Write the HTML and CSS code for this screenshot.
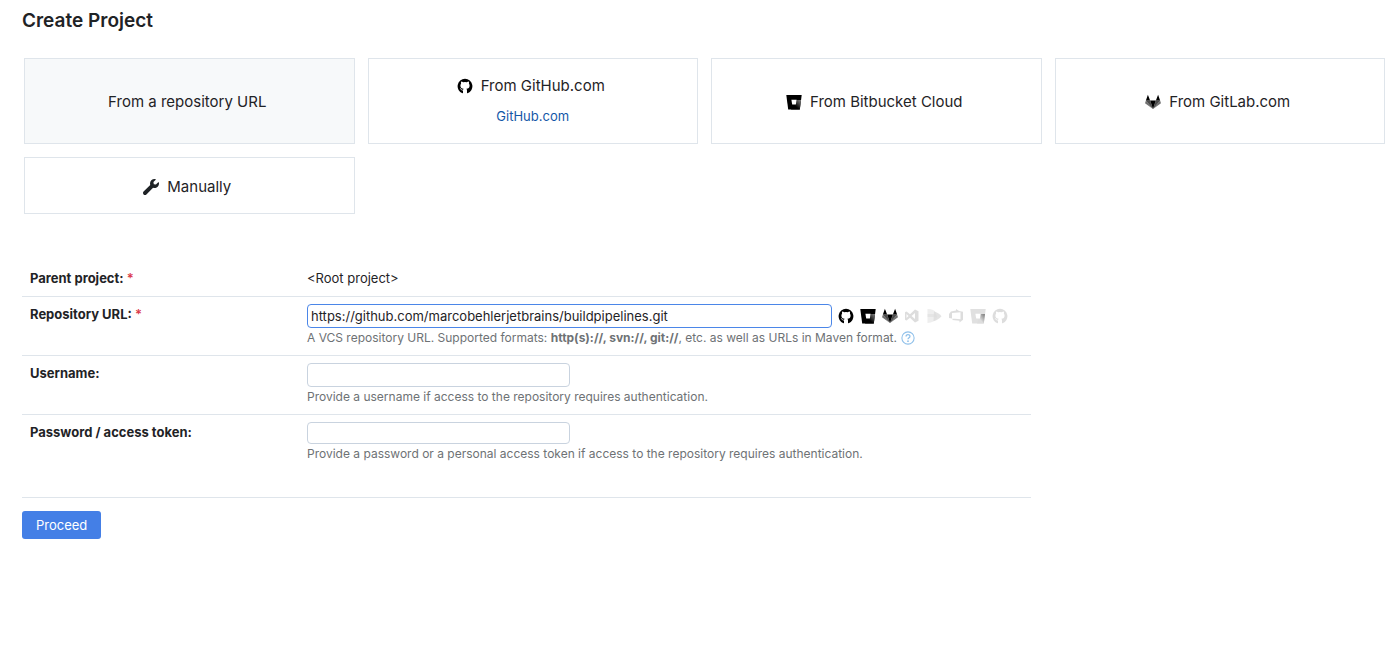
FILE: index.html
```
<!DOCTYPE html>
<html lang="en">
<head>
    <meta charset="utf-8">
    <title>Create Project</title>
    <link rel="stylesheet" href="styles.css">
</head>
<body>
    <svg class="sprite" aria-hidden="true">
        <defs>
            <linearGradient id="bucketShade" x1="1" y1="0" x2="0" y2="1">
                <stop offset="0" stop-color="#888"/>
                <stop offset="0.6" stop-color="#000"/>
            </linearGradient>
            <linearGradient id="serverShade" x1="1" y1="0" x2="0" y2="1">
                <stop offset="0.1" stop-color="#888"/>
                <stop offset="0.6" stop-color="#ddd"/>
            </linearGradient>
        </defs>
        <symbol id="github" viewBox="0 0 16 16">
            <path fill-rule="evenodd" d="M8 .7a7.500 7.500 0 0 0-2.600 14.500c.4.1.6-.2.6-.5v-2.200c-1.600.2-2.100-.7-2.300-1.200-.2-.4-.5-.7-.9-1 .9-.2 1.300.5 1.600 1 .4.5 1 .6 1.700.4.1-.4.300-.7.500-.9C4.600 10.600 3.400 9.600 3.400 7.400c0-.8.300-1.500.7-2-.2-.6-.2-1.300.1-2 .8 0 1.500.4 2 .8a7 7 0 0 1 3.600 0c.5-.4 1.200-.8 2-.8.300.7.300 1.400.1 2 .4.500.7 1.200.7 2 0 2.200-1.200 3.200-3.200 3.400.4.4.6.900.6 1.600v2.300c0 .3.200.6.600.5A7.500 7.500 0 0 0 8 .7z"/>
        </symbol>
        <symbol id="bitbucket" viewBox="0 0 16 16">
            <path d="M.3 1h15.400L13.800 15.500H2.200z"/>
            <path fill="url(#bucketShade)" d="M10.500 6H15l-1.200 9.500H5l1.500-4.500h3.500z"/>
            <path fill="#fff" d="M5.400 5.800h5.200l-.7 4.800H6.200z"/>
        </symbol>
        <symbol id="bitbucket-server" viewBox="0 0 16 16">
            <path fill="#e0e0e0" d="M.3 1h15.400L13.800 15.500H2.200z"/>
            <path fill="url(#serverShade)" d="M10.500 6H15l-1.200 9.500H7l1.500-4.500h1.500z"/>
            <path fill="#fff" d="M5.400 5.800h5.200l-.7 4.800H6.200z"/>
        </symbol>
        <symbol id="gitlab" viewBox="0 0 16 16">
            <path d="M2.900.7.900 6.600h4.200zM13.100.7l2 5.900h-4.200z"/>
            <path d="M5.100 6.400h5.800L8 15z"/>
            <path opacity=".7" d="M.9 6.400h4.200L8 15zM15.100 6.400h-4.200L8 15z"/>
            <path opacity=".55" d="M.9 6.400 0 9.300 8 15zM15.100 6.400l.9 2.900L8 15z"/>
        </symbol>
        <symbol id="wrench" viewBox="0 0 512 512">
            <path d="M507.700 109.100c-2.200-9-13.500-12.100-20.100-5.500l-74.400 74.400-67.900-11.300L334 98.900l74.400-74.400c6.600-6.600 3.400-17.900-5.700-20.200-47.400-11.700-99.600.9-136.600 37.900-39.600 39.600-50.500 97.100-34.100 147.200L18.700 402.800c-25 25-25 65.500 0 90.500s65.500 25 90.500 0l213.200-213.200c50.100 16.700 107.500 5.700 147.400-34.200 37.100-37.100 49.700-89.300 37.900-136.800z"/>
        </symbol>
        <symbol id="studio" viewBox="0 0 16 16">
            <path fill-rule="evenodd" d="M11 1.500l3.500 1.700v9.600L11 14.500l-5-4.700-3.500 2.700L1 11.700V4.300l1.500-.8L6 6.200zM11 5L7.500 8l3.500 3zM2.500 6v4l2-2z"/>
        </symbol>
        <symbol id="space" viewBox="0 0 16 16">
            <path opacity=".5" d="M1.500 1C6 1 9 2.500 10 5l1 4H1.500z"/>
            <path opacity=".5" d="M1.500 6H10l1 4c-2 3-5 4.700-9.500 5z"/>
            <path opacity=".8" d="M8 3.500c3 .8 5.500 2.300 7.500 4.700-2.200 2.500-4.700 4-8 5z"/>
        </symbol>
        <symbol id="devops" viewBox="0 0 16 16">
            <path fill-rule="evenodd" d="M1 6l2-2.500L8 2.500V1l3 2 4 .8v8L11.500 14.500v-1.700L4.500 12v-1.500L1 10zM4 5v5.500l8.500.8V4.200z"/>
        </symbol>
        <symbol id="help" viewBox="0 0 16 16">
            <circle cx="8" cy="8" r="7" fill="none" stroke="currentColor" stroke-width="1.200"/>
            <path fill="none" stroke="currentColor" stroke-width="1.500" d="M5.800 6.400c0-2.900 4.400-2.900 4.400-.2 0 1.600-2.200 1.600-2.200 3.300"/>
            <circle cx="8" cy="11.700" r="1" fill="currentColor"/>
        </symbol>
    </svg>

    <main class="page">
        <h1 class="page-title">Create Project</h1>

        <div class="options">
            <button type="button" class="option option-selected">From a repository URL</button>
            <div class="option option-stacked">
                <button type="button" class="option-name"><svg class="icon icon-brand"><use href="#github"/></svg>From GitHub.com</button>
                <a class="option-link" href="#">GitHub.com</a>
            </div>
            <button type="button" class="option"><svg class="icon icon-brand"><use href="#bitbucket"/></svg>From Bitbucket Cloud</button>
            <button type="button" class="option"><svg class="icon icon-brand"><use href="#gitlab"/></svg>From GitLab.com</button>
            <button type="button" class="option option-manual"><svg class="icon"><use href="#wrench"/></svg>Manually</button>
        </div>

        <form class="project-form">
            <div class="row row-parent">
                <div class="row-label">Parent project: <span class="required">*</span></div>
                <div class="row-field">&lt;Root project&gt;</div>
            </div>

            <div class="row">
                <label class="row-label" for="url">Repository URL: <span class="required">*</span></label>
                <div class="row-field">
                    <div class="url-line">
                        <input type="text" class="text-field url-field" id="url" name="url" value="https://github.com/marcobehlerjetbrains/buildpipelines.git">
                        <div class="sources">
                            <button type="button" class="source" aria-label="GitHub"><svg class="icon"><use href="#github"/></svg></button>
                            <button type="button" class="source" aria-label="Bitbucket Cloud"><svg class="icon"><use href="#bitbucket"/></svg></button>
                            <button type="button" class="source" aria-label="GitLab"><svg class="icon"><use href="#gitlab"/></svg></button>
                            <button type="button" class="source source-off" aria-label="Visual Studio"><svg class="icon"><use href="#studio"/></svg></button>
                            <button type="button" class="source source-off" aria-label="Space"><svg class="icon"><use href="#space"/></svg></button>
                            <button type="button" class="source source-off" aria-label="Azure DevOps"><svg class="icon"><use href="#devops"/></svg></button>
                            <button type="button" class="source" aria-label="Bitbucket Server"><svg class="icon"><use href="#bitbucket-server"/></svg></button>
                            <button type="button" class="source source-off" aria-label="GitHub Enterprise"><svg class="icon"><use href="#github"/></svg></button>
                        </div>
                    </div>
                    <div class="note">A VCS repository URL. Supported formats: <b>http(s)://, svn://, git://</b>, etc. as well as URLs in Maven format. <a class="help" href="#" aria-label="Help"><svg class="help-icon"><use href="#help"/></svg></a></div>
                </div>
            </div>

            <div class="row">
                <label class="row-label" for="username">Username:</label>
                <div class="row-field">
                    <input type="text" class="text-field" id="username" name="username">
                    <div class="note">Provide a username if access to the repository requires authentication.</div>
                </div>
            </div>

            <div class="row row-password">
                <label class="row-label" for="password">Password / access token:</label>
                <div class="row-field">
                    <input type="password" class="text-field password-field" id="password" name="password">
                    <div class="note">Provide a password or a personal access token if access to the repository requires authentication.</div>
                </div>
            </div>

            <button type="submit" class="proceed">Proceed</button>
        </form>
    </main>
</body>
</html>
```
FILE: styles.css
```
* {
    box-sizing: border-box;
}

body {
    margin: 0;
    background: #fff;
    color: #1f2326;
    font-family: Inter, "Liberation Sans", sans-serif;
    font-size: 13px;
    line-height: 20px;
}

button,
input {
    font: inherit;
    color: inherit;
}

button {
    margin: 0;
    padding: 0;
    border: 0;
    background: none;
    cursor: pointer;
}

a {
    color: #1458a8;
    text-decoration: none;
}

/* kept rendered, a gradient inside display: none does not paint */
.sprite {
    position: absolute;
    width: 0;
    height: 0;
}

.icon {
    flex: none;
    width: 16px;
    height: 16px;
    fill: currentColor;
}

.icon-brand {
    color: #000;
}

.page {
    padding: 9px 15px 24px 22px;
}

.page-title {
    margin: 0 0 25px;
    font-size: 19px;
    line-height: 24px;
    font-weight: 600;
}

/* ways to create a project */
.options {
    display: grid;
    grid-template-columns: repeat(4, 1fr);
    gap: 13px;
    padding-left: 2px;
}

.option {
    display: flex;
    align-items: center;
    justify-content: center;
    gap: 8px;
    min-height: 86px;
    padding: 2px 4px 0 0;
    border: 1px solid #dfe5eb;
    font-size: 15px;
}

.option-selected {
    background: #f7f9fa;
}

.option-stacked {
    flex-direction: column;
    gap: 10px;
    padding: 0;
}

.option-name {
    display: flex;
    align-items: center;
    gap: 8px;
    padding-right: 4px;
    font-size: 15px;
}

.option-link {
    font-size: 13px;
}

.option-manual {
    min-height: 57px;
}

/* form */
.project-form {
    width: 74%;
    margin-top: 47px;
}

.row {
    display: flex;
    min-height: 59px;
    padding: 7px 0;
    border-bottom: 1px solid #dfe5eb;
}

.row-parent {
    min-height: 36px;
}

.row-password {
    min-height: 83px;
}

.row-label {
    flex: none;
    width: 285px;
    padding-left: 8px;
    font-weight: 700;
}

.required {
    color: #db3b4b;
    font-weight: 600;
}

.row-field {
    flex: 1;
}

.url-line {
    display: flex;
    align-items: center;
    gap: 6px;
}

.text-field {
    display: block;
    width: 263px;
    height: 24px;
    padding: 0 3px;
    border: 1px solid #c9d3df;
    border-radius: 4px;
    background: #fff;
    outline: none;
}

.url-field {
    width: 525px;
    border-color: #4b86e8;
}

.password-field {
    height: 22px;
}

.sources {
    display: flex;
    gap: 6px;
}

.source {
    display: flex;
    color: #000;
}

.source-off {
    opacity: 0.13;
}

.note {
    color: #6e7275;
    font-size: 12px;
}

.help {
    color: #8fc0ea;
}

.help-icon {
    width: 14px;
    height: 14px;
    margin-left: 1px;
    vertical-align: -3px;
}

.proceed {
    height: 28px;
    margin-top: 13px;
    padding: 0 14px;
    border-radius: 3px;
    background: #447fe6;
    color: #fff;
}
```
